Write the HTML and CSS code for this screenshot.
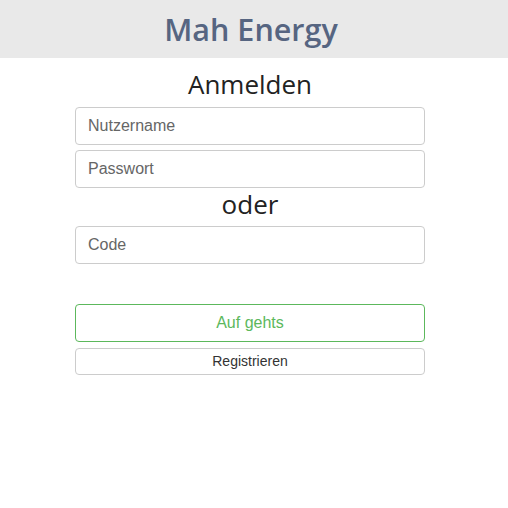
FILE: index.html
```html
<!DOCTYPE html>
<html>
<head>
<meta charset="utf-8">
<link rel="stylesheet" href="styles.css">
</head>
<body>
<header class="top">
  <h1 class="brand">Mah Energy</h1>
</header>
<main class="login">
  <h2 class="heading">Anmelden</h2>
  <input class="field" type="text" placeholder="Nutzername">
  <input class="field" type="password" placeholder="Passwort">
  <div class="or">oder</div>
  <input class="field" type="text" placeholder="Code">
  <div class="spacer"></div>
  <button class="btn btn-go">Auf gehts</button>
  <button class="btn btn-reg">Registrieren</button>
</main>
</body>
</html>
```
FILE: styles.css
```css
html, body {
  margin: 0;
  padding: 0;
  background: #fff;
}
body {
  font-family: "Liberation Sans", Arial, sans-serif;
}
.top {
  background: #e9e9e9;
  height: 58px;
  padding-right: 6px;
  display: flex;
  align-items: center;
  justify-content: center;
}
.brand {
  margin: 0;
  font-family: "Open Sans", "Noto Sans", sans-serif;
  font-weight: 600;
  font-size: 30.5px;
  color: #566581;
  line-height: 1;
}
.login {
  width: 350px;
  margin: 0 0 0 75px;
  display: flex;
  flex-direction: column;
}
.heading {
  margin: 0;
  height: 49px;
  padding-top: 2px;
  box-sizing: border-box;
  display: flex;
  align-items: center;
  justify-content: center;
  font-family: "Open Sans", "Noto Sans", sans-serif;
  font-weight: 400;
  font-size: 26px;
  color: #222;
}
.field {
  box-sizing: border-box;
  height: 38px;
  margin: 0 0 5px 0;
  padding: 0 12px;
  border: 1px solid #ccc;
  border-radius: 4px;
  font-family: "Liberation Sans", Arial, sans-serif;
  font-size: 16px;
  color: #555;
  background: #fff;
  outline: none;
}
.field::placeholder {
  color: #666;
}
.or {
  height: 32px;
  margin-top: -5px;
  display: flex;
  align-items: center;
  justify-content: center;
  font-family: "Open Sans", "Noto Sans", sans-serif;
  font-size: 26px;
  color: #222;
  line-height: 1;
}
.or + .field {
  margin-top: 6px;
}
.spacer {
  height: 35px;
}
.btn {
  box-sizing: border-box;
  width: 100%;
  background: #fff;
  border-radius: 4px;
  font-family: "Liberation Sans", Arial, sans-serif;
  cursor: pointer;
  padding: 0;
}
.btn-go {
  height: 38px;
  border: 1px solid #5cb85c;
  color: #5cb85c;
  font-size: 16px;
  margin-bottom: 6px;
}
.btn-reg {
  height: 27px;
  border: 1px solid #ccc;
  color: #333;
  font-size: 14px;
  padding-bottom: 2px;
}
```
